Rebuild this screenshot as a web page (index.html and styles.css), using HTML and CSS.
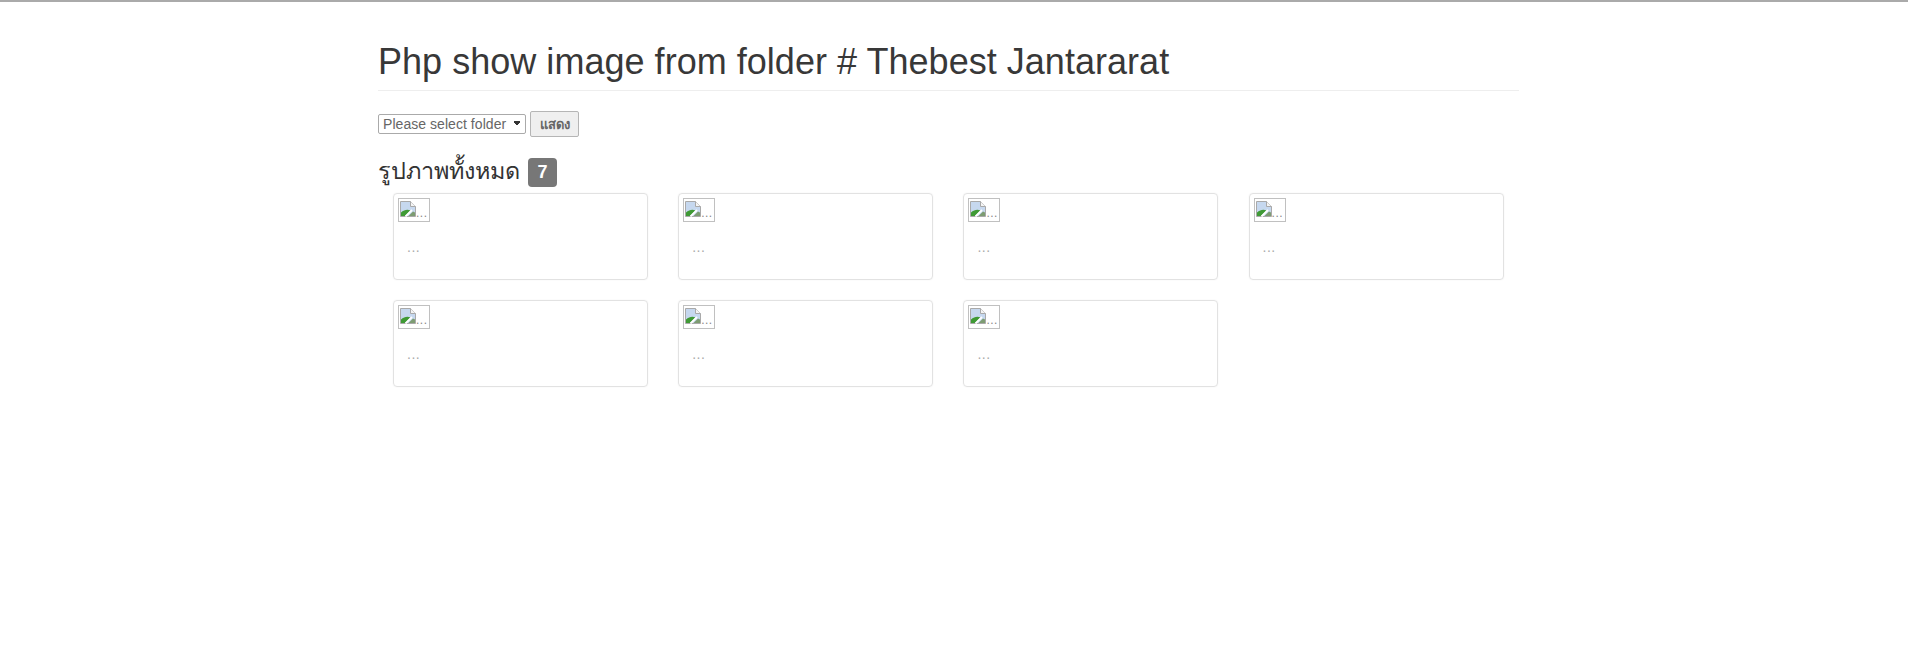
FILE: index.html
```html
<!DOCTYPE html>
<html lang="th">
<head>
    <meta charset="UTF-8">
    <title>Php show image from folder</title>
    <link rel="stylesheet" href="styles.css">
</head>
<body>
    <div class="container">
        <h1 class="page-header">Php show image from folder # Thebest Jantararat</h1>
        <form class="folder-form">
            <select class="folder-select">
                <option>Please select folder</option>
            </select>
            <button type="button" class="show-btn">แสดง</button>
        </form>
        <h3 class="total"><span class="total-label">รูปภาพทั้งหมด</span> <span class="badge">7</span></h3>
        <div class="gallery">
            <div class="thumbnail">
                <span class="broken-img"><svg class="broken-icon" viewBox="0 0 16 16"><use href="#broken"/></svg>...</span>
                <p class="caption">...</p>
            </div>
            <div class="thumbnail">
                <span class="broken-img"><svg class="broken-icon" viewBox="0 0 16 16"><use href="#broken"/></svg>...</span>
                <p class="caption">...</p>
            </div>
            <div class="thumbnail">
                <span class="broken-img"><svg class="broken-icon" viewBox="0 0 16 16"><use href="#broken"/></svg>...</span>
                <p class="caption">...</p>
            </div>
            <div class="thumbnail">
                <span class="broken-img"><svg class="broken-icon" viewBox="0 0 16 16"><use href="#broken"/></svg>...</span>
                <p class="caption">...</p>
            </div>
            <div class="thumbnail">
                <span class="broken-img"><svg class="broken-icon" viewBox="0 0 16 16"><use href="#broken"/></svg>...</span>
                <p class="caption">...</p>
            </div>
            <div class="thumbnail">
                <span class="broken-img"><svg class="broken-icon" viewBox="0 0 16 16"><use href="#broken"/></svg>...</span>
                <p class="caption">...</p>
            </div>
            <div class="thumbnail">
                <span class="broken-img"><svg class="broken-icon" viewBox="0 0 16 16"><use href="#broken"/></svg>...</span>
                <p class="caption">...</p>
            </div>
        </div>
    </div>
    <svg class="icon-defs" width="0" height="0">
        <symbol id="broken" viewBox="0 0 16 16">
            <path d="M0.5 0.5H10.5L15.5 5.5V15.5H0.5Z" fill="#c6d8ef" stroke="#a9a9a9" stroke-width="1"/>
            <path d="M10.5 0.5V5.5H15.5" fill="#f4f4f4" stroke="#a9a9a9" stroke-width="1"/>
            <path d="M1 15V11.5C4 8.5 8 8 10.5 9.5L5 15Z" fill="#3f9a35"/>
            <path d="M8.5 15L13 10.5L15 11.5V15Z" fill="#7d9c72"/>
            <path d="M5.5 15.5L12 9" stroke="#fff" stroke-width="1.8"/>
        </symbol>
    </svg>
</body>
</html>
```

FILE: styles.css
```css
html, body {
    margin: 0;
    padding: 0;
}
body {
    font-family: 'Liberation Sans', Arial, sans-serif;
    font-size: 14px;
    color: #333;
    background-color: #fff;
    border-top: 2px solid #aaa;
    min-height: 663px;
    box-sizing: border-box;
}
.container {
    width: 1141px;
    margin-left: 378px;
}
.page-header {
    font-size: 36px;
    font-weight: 400;
    line-height: 40px;
    letter-spacing: 0.03px;
    margin: 0;
    padding: 40px 0 8px;
    border-bottom: 1px solid #eee;
    color: #383838;
}
.folder-form {
    display: flex;
    align-items: center;
    gap: 4px;
    margin-top: 20px;
    height: 26px;
}
.folder-select {
    appearance: none;
    width: 148px;
    height: 20px;
    padding: 0 0 0 4px;
    font-family: 'Liberation Sans', Arial, sans-serif;
    font-size: 14px;
    letter-spacing: 0.05px;
    color: #666;
    background-color: #fff;
    background-image: linear-gradient(45deg, transparent 50%, #333 50%), linear-gradient(-45deg, transparent 50%, #333 50%);
    background-size: 3px 6px, 3px 6px;
    background-position: right 8px top 6px, right 5px top 6px;
    background-repeat: no-repeat;
    border: 1px solid #aaa;
    border-radius: 2px;
}
.show-btn {
    width: 49px;
    height: 26px;
    padding: 0;
    font-family: 'Liberation Sans', 'Noto Sans', sans-serif;
    font-size: 13px;
    font-weight: 700;
    color: #666;
    background-color: #efefef;
    border: 1px solid #b5b5b5;
    border-radius: 2px;
}
.total {
    display: flex;
    align-items: center;
    gap: 8px;
    height: 29px;
    margin: 21px 0 6px;
    font-size: 23.4px;
    font-weight: 400;
    line-height: 24px;
}
.total-label {
    margin-bottom: 4px;
}
.badge {
    display: block;
    width: 29px;
    height: 29px;
    font-size: 18px;
    font-weight: 700;
    line-height: 29px;
    text-align: center;
    color: #fff;
    background-color: #777;
    border-radius: 4px;
}
.gallery {
    display: grid;
    grid-template-columns: repeat(4, 285.2px);
    row-gap: 20px;
    padding-left: 15px;
}
.thumbnail {
    width: 255px;
    height: 87px;
    box-sizing: border-box;
    padding: 4px;
    border: 1px solid #e2e2e2;
    border-radius: 4px;
    box-shadow: 0 0 2px rgba(0,0,0,0.06);
}
.broken-img {
    display: flex;
    align-items: flex-end;
    width: 32px;
    height: 24px;
    box-sizing: border-box;
    padding: 1px;
    font-size: 12px;
    line-height: 14px;
    letter-spacing: 0.5px;
    color: #888;
    border: 1px solid #c0c0c0;
    overflow: hidden;
}
.broken-icon {
    flex: none;
    width: 16px;
    height: 16px;
    margin-bottom: 3px;
}
.caption {
    margin: 15px 0 0 9px;
    font-size: 14px;
    line-height: 20px;
    letter-spacing: 0.5px;
    color: #aaa;
}
.icon-defs {
    position: absolute;
}
```
